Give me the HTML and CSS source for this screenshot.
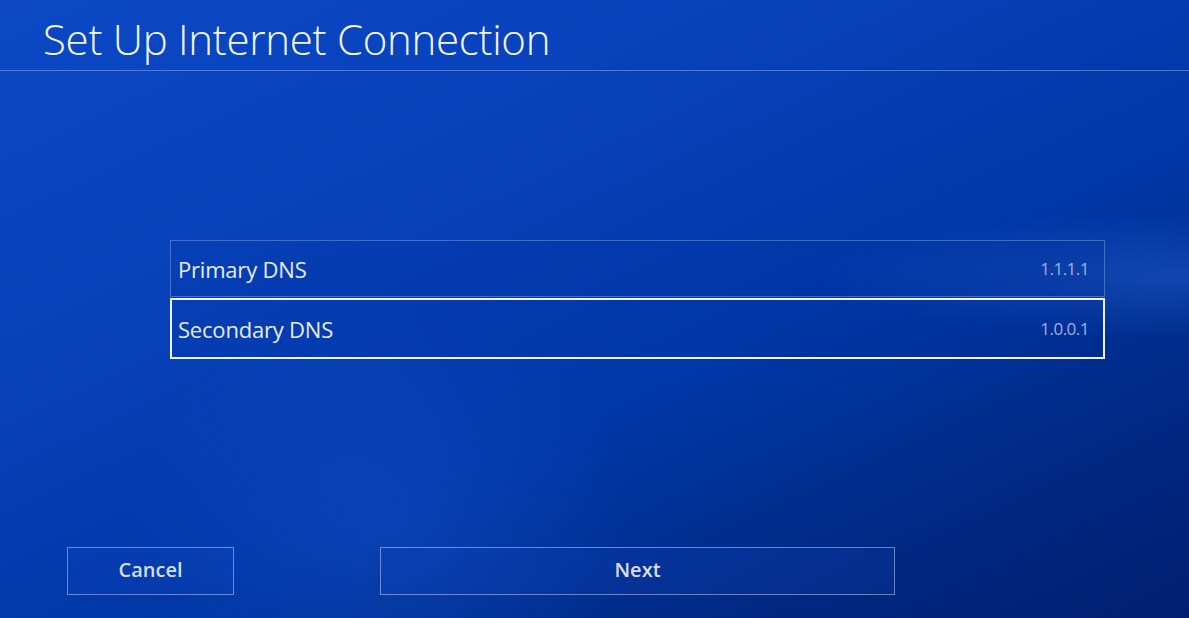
FILE: index.html
```html
<!DOCTYPE html>
<html lang="en">
<head>
    <meta charset="UTF-8">
    <meta name="viewport" content="width=device-width, initial-scale=1.0">
    <title>Set Up Internet Connection</title>
    <link rel="stylesheet" href="styles.css">
</head>
<body>
    <div class="screen">
        <header class="title-bar">
            <h1>Set Up Internet Connection</h1>
        </header>

        <div class="content">
            <ul class="dns-list">
                <li class="dns-row">
                    <span class="label">Primary DNS</span>
                    <span class="value">1.1.1.1</span>
                </li>
                <li class="dns-row selected">
                    <span class="label">Secondary DNS</span>
                    <span class="value">1.0.0.1</span>
                </li>
            </ul>
        </div>

        <footer class="actions">
            <button class="btn btn-cancel">Cancel</button>
            <button class="btn btn-next">Next</button>
        </footer>
    </div>
</body>
</html>
```

FILE: styles.css
```css
html, body {
    margin: 0;
    padding: 0;
    height: 100%;
    overflow: hidden;
}
body {
    font-family: "Open Sans", "Noto Sans", sans-serif;
    color: #fff;
    background: #0038a8;
}
.screen {
    display: flex;
    flex-direction: column;
    height: 618px;
    background:
        radial-gradient(ellipse 520px 90px at 1180px 275px, rgba(50, 110, 220, 0.35), transparent 70%),
        radial-gradient(ellipse 360px 300px at 380px 520px, rgba(30, 90, 215, 0.3), transparent 70%),
        linear-gradient(155deg, #0b48c4 0%, #0842bb 30%, #0037a6 60%, #00277f 85%, #001f70 100%);
}
.title-bar {
    height: 71px;
    border-bottom: 1px solid rgba(150, 180, 240, 0.5);
    padding-left: 43px;
    box-sizing: border-box;
}
.title-bar h1 {
    margin: 0;
    padding-top: 11px;
    font-size: 42px;
    font-weight: 300;
    line-height: 56px;
    color: #f2f5fc;
    letter-spacing: -0.3px;
}
.content {
    flex: 1;
    padding-top: 169px;
}
.dns-list {
    list-style: none;
    margin: 0 0 0 170px;
    padding: 0;
    width: 935px;
}
.dns-row {
    display: flex;
    align-items: center;
    justify-content: space-between;
    height: 57px;
    padding: 0 15px 0 7px;
    box-sizing: border-box;
    border: 1px solid rgba(140, 170, 240, 0.45);
    background: rgba(0, 40, 150, 0.15);
}
.dns-row.selected {
    height: 61px;
    margin-top: 1px;
    border: 2px solid #eef3ff;
    padding-left: 6px;
    padding-right: 14px;
    background: rgba(0, 40, 150, 0.1);
}
.dns-row .label {
    font-size: 22px;
    color: #e6ecf8;
    letter-spacing: -0.2px;
}
.dns-row .value {
    font-size: 17px;
    color: #9db3dc;
    letter-spacing: -0.5px;
}
.actions {
    display: flex;
    gap: 146px;
    padding: 0 0 23px 67px;
}
.btn {
    height: 48px;
    font-family: "Open Sans", "Noto Sans", sans-serif;
    font-size: 20px;
    font-weight: 600;
    line-height: 42px;
    color: #d8deea;
    background: rgba(20, 70, 190, 0.2);
    border: 1.5px solid rgba(170, 190, 240, 0.6);
    padding: 0 0 2px;
}
.btn-cancel {
    width: 167px;
}
.btn-next {
    width: 515px;
}
```
